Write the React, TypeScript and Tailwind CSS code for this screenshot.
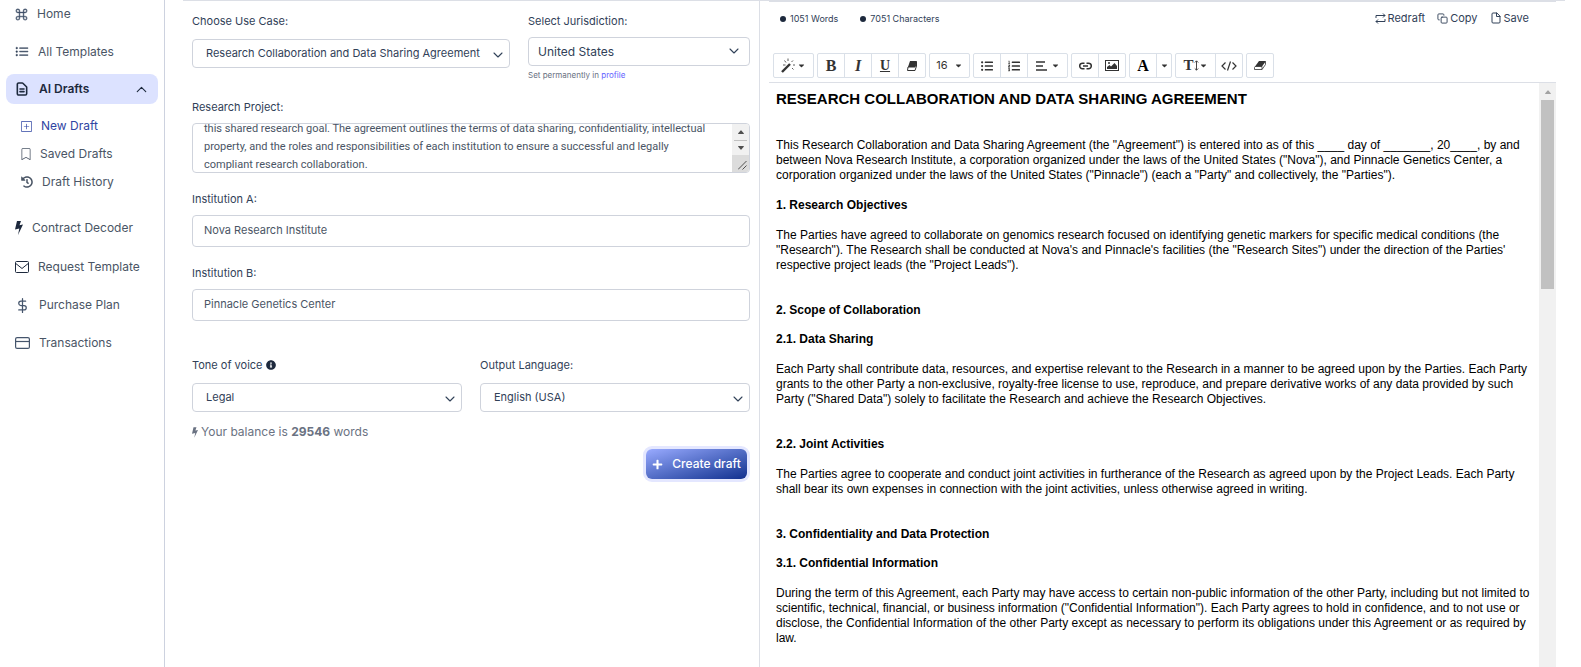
import { useEffect, useRef, useState, type ReactNode } from 'react';
import clsx from 'clsx';
import { BsBookmark, BsCaretUpFill, BsCaretDownFill, BsCommand, BsListUl, BsPlusSquare } from 'react-icons/bs';
import { FaCaretDown, FaHistory, FaInfoCircle, FaListOl, FaListUl, FaPlus } from 'react-icons/fa';
import { FiChevronDown, FiChevronUp, FiCopy, FiDollarSign, FiFile } from 'react-icons/fi';
import { HiOutlineDocumentText } from 'react-icons/hi';

interface SelectFieldProps {
	id: string;
	label: ReactNode;
	options: string[];
	className?: string;
	chevronClassName?: string;
}

interface TextFieldProps {
	id: string;
	label: string;
	value: string;
	onChange: (value: string) => void;
}

interface NavItemProps {
	icon: ReactNode;
	label: string;
	className?: string;
}

type Block = { type: 'heading' | 'section' | 'text'; text: string };

const projectText = `this shared research goal. The agreement outlines the terms of data sharing, confidentiality, intellectual property, and the roles and responsibilities of each institution to ensure a successful and legally compliant research collaboration.`;

// "section" is a heading with extra space above it
const blocks: Block[] = [
	{
		type: 'text',
		text: 'This Research Collaboration and Data Sharing Agreement (the "Agreement") is entered into as of this ____ day of _______, 20____, by and between Nova Research Institute, a corporation organized under the laws of the United States ("Nova"), and Pinnacle Genetics Center, a corporation organized under the laws of the United States ("Pinnacle") (each a "Party" and collectively, the "Parties").',
	},
	{ type: 'heading', text: '1. Research Objectives' },
	{
		type: 'text',
		text: 'The Parties have agreed to collaborate on genomics research focused on identifying genetic markers for specific medical conditions (the "Research"). The Research shall be conducted at Nova\'s and Pinnacle\'s facilities (the "Research Sites") under the direction of the Parties\' respective project leads (the "Project Leads").',
	},
	{ type: 'section', text: '2. Scope of Collaboration' },
	{ type: 'heading', text: '2.1. Data Sharing' },
	{
		type: 'text',
		text: 'Each Party shall contribute data, resources, and expertise relevant to the Research in a manner to be agreed upon by the Parties. Each Party grants to the other Party a non-exclusive, royalty-free license to use, reproduce, and prepare derivative works of any data provided by such Party ("Shared Data") solely to facilitate the Research and achieve the Research Objectives.',
	},
	{ type: 'section', text: '2.2. Joint Activities' },
	{
		type: 'text',
		text: 'The Parties agree to cooperate and conduct joint activities in furtherance of the Research as agreed upon by the Project Leads. Each Party shall bear its own expenses in connection with the joint activities, unless otherwise agreed in writing.',
	},
	{ type: 'section', text: '3. Confidentiality and Data Protection' },
	{ type: 'heading', text: '3.1. Confidential Information' },
	{
		type: 'text',
		text: 'During the term of this Agreement, each Party may have access to certain non-public information of the other Party, including but not limited to scientific, technical, financial, or business information ("Confidential Information"). Each Party agrees to hold in confidence, and to not use or disclose, the Confidential Information of the other Party except as necessary to perform its obligations under this Agreement or as required by law.',
	},
];

const BoltIcon = ({ className }: { className?: string }) => (
	<svg viewBox="0 0 8 14" fill="currentColor" className={className}>
		<path d="M2 0h4L4.500 4.300 8 3.500 3 14l1.300-6.500L0 8.500z" />
	</svg>
);

const EnvelopeIcon = () => (
	<svg width="15" height="12" viewBox="0 0 15 12" fill="none" stroke="currentColor" className="text-slate-800">
		<rect x=".5" y=".5" width="13" height="11" rx="1" />
		<path d="M.8 2.500 7 7.500l6.200-5" />
	</svg>
);

const CardIcon = () => (
	<svg width="15" height="12" viewBox="0 0 15 12" fill="none" stroke="currentColor" className="text-slate-600">
		<rect x=".6" y=".6" width="13.8" height="10.8" rx="1.500" strokeWidth="1.2" />
		<path d="M.5 4.500h14" strokeWidth="1.2" />
	</svg>
);

const NavItem = ({ icon, label, className }: NavItemProps) => (
	<a href="#" className={clsx('flex h-7 items-center text-[12px]', className)}>
		{icon}
		{label}
	</a>
);

const Sidebar = () => (
	<nav className="w-[165px] shrink-0 border-r border-[#cdd2df] px-[6px] text-gray-600">
		<NavItem
			icon={<BsCommand size={13} strokeWidth={0.5} className="text-slate-600" />}
			label="Home"
			className="gap-[9px] pl-[9px]"
		/>
		<NavItem
			icon={<BsListUl size={14} strokeWidth={0.5} className="text-slate-700" />}
			label="All Templates"
			className="mt-[10px] gap-[9px] pl-[9px]"
		/>
		<button
			type="button"
			aria-expanded="true"
			className="mt-2 flex h-[30px] w-[152px] items-center gap-[9px] rounded-lg bg-[#dce2ff] pl-2 pr-2 text-[12px] font-semibold text-slate-800"
		>
			<HiOutlineDocumentText size={16} strokeWidth={2.4} />
			AI Drafts
			<FiChevronUp size={17} strokeWidth={1.6} className="ml-auto" />
		</button>
		<div className="mt-2">
			<NavItem icon={<BsPlusSquare size={11} />} label="New Draft" className="gap-[9px] pl-[15px] text-[#2f45a3]" />
			<NavItem icon={<BsBookmark size={12} />} label="Saved Drafts" className="gap-2 pl-[14px]" />
			<NavItem icon={<FaHistory size={12} />} label="Draft History" className="gap-[9px] pl-[15px]" />
		</div>
		<NavItem
			icon={<BoltIcon className="h-[14px] w-2 text-slate-800" />}
			label="Contract Decoder"
			className="mt-[18px] gap-[9px] pl-[9px]"
		/>
		<NavItem icon={<EnvelopeIcon />} label="Request Template" className="mt-[11px] gap-2 pl-[9px]" />
		<NavItem
			icon={<FiDollarSign size={15} className="text-slate-600" />}
			label="Purchase Plan"
			className="mt-[10px] gap-[9px] pl-[9px]"
		/>
		<NavItem icon={<CardIcon />} label="Transactions" className="mt-[10px] gap-[9px] pl-[9px]" />
	</nav>
);

const SelectField = ({ id, label, options, className, chevronClassName }: SelectFieldProps) => (
	<div>
		<label htmlFor={id} className="flex h-[18px] items-center gap-[3px] text-[11px] text-slate-700">
			{label}
		</label>
		<div className="relative">
			<select
				id={id}
				className={clsx(
					'block h-[29px] w-full appearance-none rounded-[4px] border border-[#cfd3dc] bg-white pr-5 text-slate-700',
					className,
				)}
			>
				{options.map((option) => (
					<option key={option}>{option}</option>
				))}
			</select>
			<FiChevronDown
				size={16}
				strokeWidth={1.6}
				className={clsx('pointer-events-none absolute text-slate-700', chevronClassName)}
			/>
		</div>
	</div>
);

const TextField = ({ id, label, value, onChange }: TextFieldProps) => (
	<div>
		<label htmlFor={id} className="block text-[11px] leading-[18px] text-slate-700">
			{label}
		</label>
		<input
			id={id}
			type="text"
			value={value}
			onChange={(e) => onChange(e.target.value)}
			className="mt-[7px] block h-8 w-full rounded-[4px] border border-[#cfd3dc] px-[11px] pb-[2px] text-[11px] text-gray-600"
		/>
	</div>
);

const ProjectField = () => {
	const ref = useRef<HTMLTextAreaElement>(null);

	useEffect(() => {
		if (ref.current) ref.current.scrollTop = 10;
	}, []);

	return (
		<div>
			<label htmlFor="project" className="block text-[11px] leading-[18px] text-slate-700">
				Research Project:
			</label>
			<div className="relative mt-[7px] overflow-hidden rounded-[4px] border border-[#cfd3dc]">
				<textarea
					ref={ref}
					id="project"
					defaultValue={projectText}
					className="block h-12 w-full resize-none py-[6px] pl-[11px] pr-[34px] font-[Roboto,sans-serif] text-[11px] leading-[18px] text-gray-600 outline-none [scrollbar-width:none]"
				/>
				{/* Scrollbar and resize corner */}
				<div className="absolute inset-y-0 right-0 flex w-[17px] flex-col items-center bg-[#f1f1f1] text-[#505050]">
					<BsCaretUpFill size={8} className="my-1" />
					<span className="h-px w-[13px] bg-[#c1c1c1]" />
					<BsCaretDownFill size={8} className="my-[3px]" />
					<span className="flex w-full flex-1 items-end justify-end bg-[#dcdcdc] p-[2px]">
						<svg width="9" height="9" viewBox="0 0 9 9" stroke="#505050" fill="none">
							<path d="M0 8.5 8.5 0M4.5 8.5l4-4" />
						</svg>
					</span>
				</div>
			</div>
		</div>
	);
};

const DraftForm = () => {
	const [institutionA, setInstitutionA] = useState('Nova Research Institute');
	const [institutionB, setInstitutionB] = useState('Pinnacle Genetics Center');

	return (
		<form onSubmit={(e) => e.preventDefault()} className="border-r border-[#dcdfe6] px-[9px] pt-[11px]">
			<div className="grid h-[86px] grid-cols-[318fr_222fr] gap-[18px]">
				<SelectField
					id="use-case"
					label="Choose Use Case:"
					options={['Research Collaboration and Data Sharing Agreement']}
					className="mt-[9px] pl-[13px] text-[11px]"
					chevronClassName="right-[4px] top-2"
				/>
				<div>
					<SelectField
						id="jurisdiction"
						label="Select Jurisdiction:"
						options={['United States']}
						className="mt-[7px] pl-[9px] text-[12px]"
						chevronClassName="right-2 top-[6px]"
					/>
					<p className="mt-[3px] text-[8px] leading-3 text-gray-500">
						Set permanently in{' '}
						<a href="#" className="text-indigo-500">
							profile
						</a>
					</p>
				</div>
			</div>
			<ProjectField />
			<div className="mt-[17px] flex flex-col gap-[17px]">
				<TextField id="institution-a" label="Institution A:" value={institutionA} onChange={setInstitutionA} />
				<TextField id="institution-b" label="Institution B:" value={institutionB} onChange={setInstitutionB} />
			</div>
			<div className="mt-[35px] grid grid-cols-2 gap-[18px]">
				<SelectField
					id="tone"
					label={
						<>
							Tone of voice <FaInfoCircle size={10} className="text-slate-800" />
						</>
					}
					options={['Legal']}
					className="mt-[9px] pl-[13px] text-[11px]"
					chevronClassName="right-[4px] top-2"
				/>
				<SelectField
					id="language"
					label="Output Language:"
					options={['English (USA)']}
					className="mt-[9px] pl-[13px] text-[11px]"
					chevronClassName="right-[4px] top-2"
				/>
			</div>
			<p className="mt-[10px] flex h-5 items-center gap-[3px] text-[12px] text-gray-500">
				<BoltIcon className="h-[11px] w-[6px]" />
				<span>
					Your balance is <b className="font-bold">29546</b> words
				</span>
			</p>
			<button
				type="submit"
				className="ml-auto mr-[3px] mt-[7px] flex h-[30px] w-[101px] items-center justify-center gap-[9px] rounded-md bg-linear-to-br from-[#9aabff] to-[#12308f] text-[12px] font-medium text-white ring-3 ring-[#e4e7ff]"
			>
				<FaPlus size={11} />
				Create draft
			</button>
		</form>
	);
};

const ToolGroup = ({ children }: { children: ReactNode }) => (
	<div className="flex h-[25px] divide-x divide-[#dae0e8] rounded-[2px] border border-[#dae0e8] text-[#333]">{children}</div>
);

const ToolButton = ({ label, className, children }: { label: string; className?: string; children: ReactNode }) => (
	<button
		type="button"
		aria-label={label}
		className={clsx('flex h-full items-center justify-center', className ?? 'w-[27px] last:w-[26px]')}
	>
		{children}
	</button>
);

const Toolbar = () => (
	<div className="flex flex-wrap gap-[3px] px-1">
		<ToolGroup>
			<ToolButton label="Style" className="w-[39px]">
				<svg width="16" height="16" viewBox="0 0 16 16" fill="none" stroke="currentColor">
					<path d="M1 14 9 6" strokeWidth="2.4" />
					<path d="M3.5 2.5l1.5 2M7 .5v2.5M12 2.5 10.5 4M2 7h2.5M12 7h2M11 10l1.5 1.5" strokeWidth=".8" />
				</svg>
				<FaCaretDown size={9} />
			</ToolButton>
		</ToolGroup>
		<ToolGroup>
			<ToolButton label="Bold">
				<b className="font-['Liberation_Serif',serif] text-base">B</b>
			</ToolButton>
			<ToolButton label="Italic">
				<i className="font-['Liberation_Serif',serif] text-base font-bold">I</i>
			</ToolButton>
			<ToolButton label="Underline">
				<u className="font-['Liberation_Serif',serif] text-sm font-bold">U</u>
			</ToolButton>
			<ToolButton label="Remove style">
				<svg width="10" height="10" viewBox="0 0 10 10">
					<path d="M3 0h7L8 6H1z" fill="currentColor" />
					<path d="M1 6h7L9.500 1v4L8 9.500H.5z" fill="none" stroke="currentColor" />
				</svg>
			</ToolButton>
		</ToolGroup>
		<ToolGroup>
			<ToolButton label="Font size" className="w-[39px] gap-[6px] text-[11px]">
				16 <FaCaretDown size={9} />
			</ToolButton>
		</ToolGroup>
		<ToolGroup>
			<ToolButton label="Unordered list">
				<FaListUl size={12} />
			</ToolButton>
			<ToolButton label="Ordered list">
				<FaListOl size={12} />
			</ToolButton>
			<ToolButton label="Paragraph" className="w-[39px] gap-1">
				<svg width="11" height="10" viewBox="0 0 11 10" stroke="currentColor" strokeWidth="1.4">
					<path d="M0 1h9M0 5h7M0 9h11" />
				</svg>
				<FaCaretDown size={9} />
			</ToolButton>
		</ToolGroup>
		<ToolGroup>
			<ToolButton label="Link">
				<svg width="13" height="8" viewBox="0 0 13 8" fill="none" stroke="currentColor" strokeWidth="1.5">
					<path d="M5.5 1.2H3.5a2.8 2.8 0 0 0 0 5.6h2M7.5 1.2h2a2.8 2.8 0 0 1 0 5.6h-2M4 4h5" />
				</svg>
			</ToolButton>
			<ToolButton label="Picture">
				<svg width="14" height="11" viewBox="0 0 14 11">
					<rect x=".5" y=".5" width="13" height="10" fill="none" stroke="currentColor" />
					<path d="M2 9V7l2.5-2 1.5 1.5L9.5 3 12 6v3z" fill="currentColor" />
					<circle cx="4" cy="3" r="1" fill="currentColor" />
				</svg>
			</ToolButton>
		</ToolGroup>
		<ToolGroup>
			<ToolButton label="Text color">
				<b className="font-['Liberation_Serif',serif] text-base text-black">A</b>
			</ToolButton>
			<ToolButton label="More colors" className="w-[14px]">
				<FaCaretDown size={9} />
			</ToolButton>
		</ToolGroup>
		<ToolGroup>
			<ToolButton label="Line height" className="w-[40px]">
				<b className="font-['Liberation_Serif',serif] text-[15px]">T</b>
				<svg width="5" height="11" viewBox="0 0 5 11" fill="none" stroke="currentColor" strokeWidth=".9">
					<path d="M2.5 1v9M.8 2.5l1.7-1.7 1.7 1.7M.8 8.5l1.7 1.7 1.7-1.7" />
				</svg>
				<FaCaretDown size={9} />
			</ToolButton>
			<ToolButton label="Code view">
				<svg width="16" height="10" viewBox="0 0 16 10" fill="none" stroke="currentColor" strokeWidth="1.2">
					<path d="M4.5 1.5 1 5l3.5 3.5M11.5 1.5 15 5l-3.5 3.5M9.5.5l-3 9" />
				</svg>
			</ToolButton>
		</ToolGroup>
		<ToolGroup>
			<ToolButton label="Clear">
				<svg width="12" height="9" viewBox="0 0 12 9">
					<path d="M5 0h7L8 5.500H1z" fill="currentColor" />
					<path d="M1 5.500h7V8.500H.5V6.500zM8 8.500l3.500-5V.5" fill="none" stroke="currentColor" strokeWidth=".8" />
				</svg>
			</ToolButton>
		</ToolGroup>
	</div>
);

const Editor = () => (
	<section className="flex min-h-0 flex-col px-[9px]">
		<div className="flex h-[52px] items-start justify-between border-t border-[#dcdfe6] pl-[11px] pr-[27px] pt-[7px] text-slate-700">
			<div className="flex h-5 items-center gap-[22px] text-[9px]">
				<span className="flex items-center gap-1">
					<i className="size-[6px] rounded-full bg-slate-800" />
					1051 Words
				</span>
				<span className="flex items-center gap-1">
					<i className="size-[6px] rounded-full bg-slate-800" />
					7051 Characters
				</span>
			</div>
			<div className="flex h-[18px] items-center gap-3 text-[11px]">
				<button type="button" className="flex items-center gap-[2px]">
					<svg width="11" height="11" viewBox="0 0 11 11" fill="none" stroke="currentColor">
						<path d="M1 5V2.500h9M8 .5l2 2-2 2M10 6v2.500H1M3 6.500l-2 2 2 2" />
					</svg>
					Redraft
				</button>
				<button type="button" className="flex items-center gap-[2px]">
					<FiCopy size={11} />
					Copy
				</button>
				<button type="button" className="flex items-center gap-[2px]">
					<FiFile size={12} />
					Save
				</button>
			</div>
		</div>
		<Toolbar />
		<div className="mt-1 flex min-h-0 flex-1 border-t border-[#dcdfe6]">
			<article className="min-w-0 flex-1 overflow-hidden pl-[7px] pr-[6px] pt-[6px] font-['Liberation_Sans',Arial,sans-serif] text-[12px] leading-[15px] text-black">
				<h1 className="mb-[29px] text-[15px] font-bold leading-5">RESEARCH COLLABORATION AND DATA SHARING AGREEMENT</h1>
				{blocks.map(({ type, text }) =>
					type === 'text' ? (
						<p key={text} className="mb-[15px]">
							{text}
						</p>
					) : (
						<h2 key={text} className={clsx('mb-[15px] font-bold [h2+&]:-mt-px', type === 'section' && 'mt-[30px]')}>
							{text}
						</h2>
					),
				)}
			</article>
			<div className="flex w-[17px] flex-col items-center bg-[#f1f1f1] text-[#a3a3a3]">
				<BsCaretUpFill size={8} className="mb-1 mt-[5px]" />
				<span className="h-[189px] w-[13px] bg-[#c1c1c1]" />
			</div>
		</div>
	</section>
);

export default function App() {
	return (
		<div className="flex h-screen overflow-hidden bg-white font-[Inter,sans-serif]">
			<Sidebar />
			<main className="ml-[18px] mr-4 grid min-w-0 flex-1 grid-cols-[577fr_805fr] grid-rows-[minmax(0,1fr)] border-t border-[#dcdfe6]">
				<DraftForm />
				<Editor />
			</main>
		</div>
	);
}
